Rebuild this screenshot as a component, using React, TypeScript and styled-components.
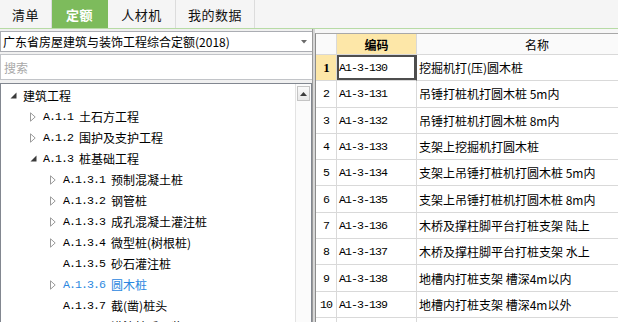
import React from 'react';
import styled, { createGlobalStyle } from 'styled-components';

const Global = createGlobalStyle`
  html, body { margin: 0; padding: 0; }
  body {
    width: 618px; height: 322px; overflow: hidden; background: #f0f0f0;
    font-family: "Noto Sans CJK SC", "Liberation Sans", sans-serif;
    font-size: 12px; color: #000;
  }
`;

const Page = styled.div`
  display: flex; flex-direction: column; width: 618px; height: 322px; overflow: hidden;
`;

const TabBar = styled.div`
  display: flex; height: 29px; flex-shrink: 0; box-sizing: border-box;
  background: #f5f5f5; border-bottom: 1px solid #b7dba5;
`;

const Tab = styled.div<{ $active?: boolean; $w: number }>`
  width: ${p => p.$w}px; box-sizing: border-box;
  display: flex; align-items: center; justify-content: center;
  font-size: 13px; letter-spacing: 0.5px;
  background: ${p => (p.$active ? '#7dbb5c' : 'transparent')};
  color: ${p => (p.$active ? '#fff' : '#111')};
  font-weight: ${p => (p.$active ? 700 : 400)};
  border-right: 1px solid ${p => (p.$active ? '#7dbb5c' : '#dcdcdc')};
`;

const Main = styled.div`
  display: flex; flex: 1; min-height: 0;
`;

const LeftPanel = styled.div`
  width: 312px; flex-shrink: 0; display: flex; flex-direction: column;
  padding-top: 2px; gap: 2px; box-sizing: border-box;
`;

const Select = styled.div`
  height: 21px; box-sizing: border-box; margin-right: -1px;
  border: 1px solid #abadb3; background: #fff;
  display: flex; align-items: center; padding: 0 5px 0 2px;
`;

const SelectText = styled.span`
  flex: 1; white-space: nowrap; font-size: 12px;
`;

const SearchInput = styled.input`
  height: 26px; box-sizing: border-box; margin: 0 -1px 1px 0;
  border: 1px solid #c2c4c8; background: #fff; outline: none;
  padding: 0 3px; font-family: "Noto Sans CJK SC", sans-serif; font-size: 12px;
  &::placeholder { color: #a8a8a8; }
`;

const TreeBox = styled.div`
  flex: 1; min-height: 0; display: flex; box-sizing: border-box;
  border: 1px solid #828790; border-bottom: none; background: #fff;
`;

const TreeList = styled.div`
  flex: 1; overflow: hidden; padding-top: 1px;
`;

const TreeRow = styled.div<{ $level: number; $selected?: boolean }>`
  height: 21px; display: flex; align-items: center; white-space: nowrap;
  padding-left: ${p => 6 + p.$level * 20}px;
  color: ${p => (p.$selected ? '#2b87e0' : '#000')};
`;

const Toggle = styled.span`
  width: 12px; height: 12px; display: flex; align-items: center; justify-content: center;
  margin-right: 4px; flex-shrink: 0;
`;

const Code = styled.span`
  font-family: "Liberation Mono", monospace; font-size: 11.6px; letter-spacing: -0.95px;
  white-space: pre;
`;

const Label = styled.span`
  font-size: 12px;
`;

const ScrollBar = styled.div`
  width: 16px; flex-shrink: 0; border-left: 1px solid #e3e3e3; background: #fbfbfb;
  display: flex; flex-direction: column; padding-top: 2px; box-sizing: border-box;
`;

const ScrollBtn = styled.div`
  height: 15px; margin: 0 1px; box-sizing: border-box;
  border: 1px solid #c4c4c4; background: linear-gradient(#fafafa, #e8e8e8);
  display: flex; align-items: center; justify-content: center;
`;

const Splitter = styled.div`
  width: 3px; flex-shrink: 0; background: #d6d6d6;
  border-left: 1px solid #9a9a9a; box-sizing: border-box;
`;

const RightPanel = styled.div`
  flex: 1; min-width: 0; padding-top: 4px; display: flex; flex-direction: column;
  background: #f6f6f6;
`;

const Grid = styled.div`
  flex: 1; overflow: hidden; background: #fff;
  border-top: 1px solid #a8a8a8; border-left: 1px solid #8c8c8c;
  display: grid; grid-template-columns: 21px 80px 241px;
  grid-auto-rows: 26.3px; grid-template-rows: 21px;
  align-content: start;
`;

const Cell = styled.div<{ $hl?: boolean; $center?: boolean; $bold?: boolean; $sel?: boolean }>`
  box-sizing: border-box; display: flex; align-items: center; white-space: nowrap;
  justify-content: ${p => (p.$center ? 'center' : 'flex-start')};
  border-right: 1px solid #d9d9d9; border-bottom: 1px solid #d9d9d9;
  background: ${p => (p.$hl ? '#fde7a8' : '#fff')};
  font-weight: ${p => (p.$bold ? 700 : 400)};
  padding-left: ${p => (p.$center ? 0 : 2)}px;
  ${p => (p.$sel ? 'box-shadow: inset 0 0 0 2px #4e4e4e, inset 2px 0 0 #3d8fd6; border-right-color: #4e4e4e;' : '')}
`;

const HeadCell = styled(Cell)`
  background: ${p => (p.$hl ? '#fde7a8' : '#fafafa')};
  font-size: 12px;
`;

const RowNum = styled.span<{ $bold?: boolean }>`
  font-family: ${p => (p.$bold ? '"Liberation Serif", serif' : '"Liberation Mono", monospace')};
  font-size: ${p => (p.$bold ? 13 : 11.6)}px; letter-spacing: -0.9px;
  font-weight: ${p => (p.$bold ? 700 : 400)};
`;

const Expanded = () => (
  <svg width="7" height="7" viewBox="0 0 7 7"><path d="M6.5 0.5 L6.5 6.5 L0.5 6.5 Z" fill="#3a3a3a" /></svg>
);
const Collapsed = () => (
  <svg width="6" height="10" viewBox="0 0 6 10"><path d="M0.5 0.8 L5.2 5 L0.5 9.2 Z" fill="#fff" stroke="#9b9b9b" strokeWidth="1" /></svg>
);

type Node = { level: number; state: 'open' | 'closed' | 'leaf'; code?: string; name: string; selected?: boolean };

const tree: Node[] = [
  { level: 0, state: 'open', name: '建筑工程' },
  { level: 1, state: 'closed', code: 'A.1.1', name: '土石方工程' },
  { level: 1, state: 'closed', code: 'A.1.2', name: '围护及支护工程' },
  { level: 1, state: 'open', code: 'A.1.3', name: '桩基础工程' },
  { level: 2, state: 'closed', code: 'A.1.3.1', name: '预制混凝土桩' },
  { level: 2, state: 'closed', code: 'A.1.3.2', name: '钢管桩' },
  { level: 2, state: 'closed', code: 'A.1.3.3', name: '成孔混凝土灌注桩' },
  { level: 2, state: 'closed', code: 'A.1.3.4', name: '微型桩(树根桩)' },
  { level: 2, state: 'leaf', code: 'A.1.3.5', name: '砂石灌注桩' },
  { level: 2, state: 'closed', code: 'A.1.3.6', name: '圆木桩', selected: true },
  { level: 2, state: 'leaf', code: 'A.1.3.7', name: '截(凿)桩头' },
  { level: 2, state: 'leaf', code: 'A.1.3.8', name: '灌注桩后压浆' },
];

const rows: [string, string][] = [
  ['A1-3-130', '挖掘机打(压)圆木桩'],
  ['A1-3-131', '吊锤打桩机打圆木桩 5m内'],
  ['A1-3-132', '吊锤打桩机打圆木桩 8m内'],
  ['A1-3-133', '支架上挖掘机打圆木桩'],
  ['A1-3-134', '支架上吊锤打桩机打圆木桩 5m内'],
  ['A1-3-135', '支架上吊锤打桩机打圆木桩 8m内'],
  ['A1-3-136', '木桥及撑柱脚平台打桩支架 陆上'],
  ['A1-3-137', '木桥及撑柱脚平台打桩支架 水上'],
  ['A1-3-138', '地槽内打桩支架 槽深4m以内'],
  ['A1-3-139', '地槽内打桩支架 槽深4m以外'],
  ['', ''],
];

export default function App() {
  return (
    <>
      <Global />
      <Page>
        <TabBar>
          <Tab $w={52}>清单</Tab>
          <Tab $w={56} $active>定额</Tab>
          <Tab $w={68}>人材机</Tab>
          <Tab $w={79}>我的数据</Tab>
        </TabBar>
        <Main>
          <LeftPanel>
            <Select>
              <SelectText>广东省房屋建筑与装饰工程综合定额(2018)</SelectText>
              <svg width="6" height="4" viewBox="0 0 6 4"><path d="M0 0 L6 0 L3 3.5 Z" fill="#6a6a6a" /></svg>
            </Select>
            <SearchInput placeholder="搜索" readOnly />
            <TreeBox>
              <TreeList>
                {tree.map((n, i) => (
                  <TreeRow key={i} $level={n.level} $selected={n.selected}>
                    <Toggle>{n.state === 'open' ? <Expanded /> : n.state === 'closed' ? <Collapsed /> : null}</Toggle>
                    {n.code && <Code>{n.code + ' '}</Code>}
                    <Label>{n.name}</Label>
                  </TreeRow>
                ))}
              </TreeList>
              <ScrollBar>
                <ScrollBtn>
                  <svg width="7" height="4" viewBox="0 0 7 4"><path d="M0 4 L7 4 L3.5 0 Z" fill="#3c3c3c" /></svg>
                </ScrollBtn>
              </ScrollBar>
            </TreeBox>
          </LeftPanel>
          <Splitter />
          <RightPanel>
            <Grid>
              <HeadCell />
              <HeadCell $hl $center $bold>编码</HeadCell>
              <HeadCell $center>名称</HeadCell>
              {rows.map(([code, name], i) => (
                <React.Fragment key={i}>
                  <Cell $center $hl={i === 0}>
                    {code && <RowNum $bold={i === 0}>{i + 1}</RowNum>}
                  </Cell>
                  <Cell $sel={i === 0}><Code>{code}</Code></Cell>
                  <Cell><Label>{name}</Label></Cell>
                </React.Fragment>
              ))}
            </Grid>
          </RightPanel>
        </Main>
      </Page>
    </>
  );
}
